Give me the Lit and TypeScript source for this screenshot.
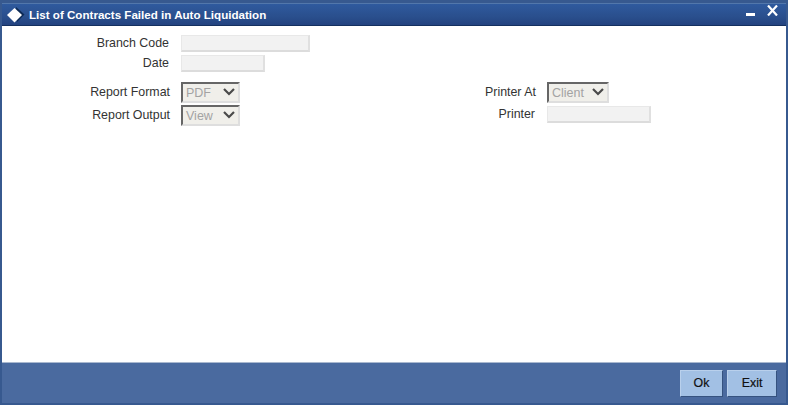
import { LitElement, html, css, svg } from "lit";
import { customElement } from "lit/decorators.js";

const chevron = svg`<svg class="chev" width="12" height="8" viewBox="0 0 12 8"><path d="M1 1 L6 6 L11 1" fill="none" stroke="#4a4a4a" stroke-width="2.2"/></svg>`;

@customElement("app-root")
export class AppRoot extends LitElement {
  static styles = css`
    :host { display: block; width: 788px; height: 405px; font-family: "Liberation Sans", Arial, sans-serif; font-size: 12.4px; color: #333; }
    .win { width: 788px; height: 405px; box-sizing: border-box; display: flex; flex-direction: column; background: #37598f; padding-top: 3px; }
    .title { height: 23px; margin: 0 2px; box-sizing: border-box; flex: none; display: flex; align-items: center; padding: 0 8px 0 5px; border-top: 1px solid #5277ab; border-bottom: 1px solid #14305f; background: linear-gradient(#2f5a9e, #2a4f8d 60%, #234380); color: #fff; font-weight: bold; font-size: 11.6px; }
    .title span { margin-left: 4px; white-space: nowrap; }
    .diamond { flex: none; display: block; margin-top: 1px; }
    .ctl { margin-left: auto; display: flex; align-items: flex-start; gap: 12px; align-self: flex-start; margin-top: 1px; }
    .min { width: 9px; height: 3px; background: #fff; margin-top: 8px; }
    .body { flex: 1; background: #fff; margin: 0 2px; padding: 9px 0 0 0; min-height: 0; border-bottom: 1px solid #a9b8cf; }
    .top { display: grid; grid-template-columns: 167px auto; column-gap: 12px; row-gap: 3px; justify-content: start; }
    .lab { text-align: right; line-height: 17px; white-space: nowrap; }
    .input { background: #f2f2f2; border: 1px solid #e8e8e8; border-bottom: 2px solid #dcdcdc; border-right: 2px solid #e0e0e0; box-sizing: border-box; height: 17px; }
    .w129 { width: 129px; }
    .w84 { width: 84px; }
    .w104 { width: 104px; }
    .report { display: flex; margin-top: 10px; }
    .col { display: grid; justify-content: start; align-items: center; }
    .c1 { grid-template-columns: 168px auto; column-gap: 11px; row-gap: 2px; width: 483px; }
    .c2 { grid-template-columns: 50px auto; column-gap: 12px; row-gap: 3px; align-content: start; }
    .sel { height: 21px; box-sizing: border-box; border-style: solid; border-width: 2px; border-color: #666 #dedede #dedede #666; background: #f0efea; color: #a3a3a3; display: flex; align-items: center; justify-content: space-between; padding: 1px 3px 0 3px; font-size: 12.5px; line-height: 15px; }
    .s59 { width: 59px; }
    .s62 { width: 62px; }
    .chev { flex: none; margin-top: -2px; }
    .foot { flex: none; height: 40px; margin: 0 2px 2px; background: #4a6a9f; display: flex; justify-content: flex-end; align-items: center; gap: 4px; padding: 0 9px 0 0; box-sizing: border-box; }
    .btn { width: 43px; height: 27px; box-sizing: border-box; background: #a2c0e4; border: 1px solid; border-color: #b9d0ec #35527f #35527f #b9d0ec; color: #111; font-size: 12.4px; text-align: center; line-height: 25px; -webkit-text-stroke: 0.2px #111; }
    .exit { width: 50px; }
  `;

  render() {
    return html`<div class="win">
      <div class="title">
        <svg class="diamond" width="18" height="16" viewBox="0 0 18 16">
          <path d="M9 0 L17.5 7.5 L10 15 Z" fill="#0d2a55"/>
          <path d="M7.5 1 L15 8 L7.5 15.5 L0 8 Z" fill="#fff"/>
        </svg>
        <span>List of Contracts Failed in Auto Liquidation</span>
        <div class="ctl">
          <div class="min"></div>
          <svg width="11" height="11" viewBox="0 0 11 11"><path d="M1 .5 L10 10.5 M10 .5 L1 10.5" stroke="#fff" stroke-width="2.2" fill="none"/></svg>
        </div>
      </div>
      <div class="body">
        <div class="top">
          <div class="lab">Branch Code</div><div class="input w129"></div>
          <div class="lab">Date</div><div class="input w84"></div>
        </div>
        <div class="report">
          <div class="col c1">
            <div class="lab">Report Format</div><div class="sel s59">PDF ${chevron}</div>
            <div class="lab">Report Output</div><div class="sel s59">View ${chevron}</div>
          </div>
          <div class="col c2">
            <div class="lab">Printer At</div><div class="sel s62">Client ${chevron}</div>
            <div class="lab">Printer</div><div class="input w104"></div>
          </div>
        </div>
      </div>
      <div class="foot">
        <div class="btn">Ok</div>
        <div class="btn exit">Exit</div>
      </div>
    </div>`;
  }
}
